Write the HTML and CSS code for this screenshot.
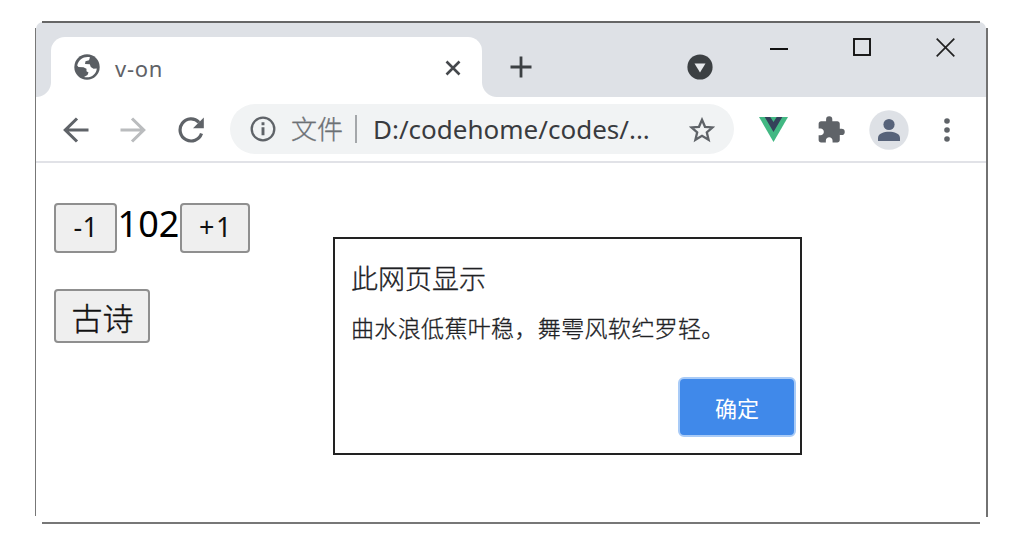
FILE: index.html
```html
<!DOCTYPE html>
<html lang="zh-CN">
<head>
<meta charset="utf-8">
<title>v-on</title>
<link rel="stylesheet" href="styles.css">
</head>
<body>
<div class="window">
  <header class="tabstrip">
    <div class="tab">
      <svg class="globe" width="26" height="26" viewBox="0 0 26 26"><circle cx="13" cy="13" r="12.700" fill="#5a5e63"/><path d="M16 3.200C10 2 4.500 5.500 3.200 11.500l1.300 1.500 5 .3 3 1.500v2.500l2 1.200-1 2.500-3.500 2C16.500 24.500 22.500 20.500 22.800 14.500l-3.300.3-2.700-1.800-1-2.700-4.800-.3.500-2.800 3.500-1z" fill="#fff"/></svg>
      <span class="tab-title">v-on</span>
      <svg class="tab-close" width="16" height="16" viewBox="0 0 16 16"><path d="M1.500 1.500l13 13M14.500 1.500l-13 13" stroke="#45484c" stroke-width="2.600"/></svg>
    </div>
    <svg class="new-tab" width="22" height="22" viewBox="0 0 22 22"><path d="M11 .5v21M.5 11h21" stroke="#3c4043" stroke-width="2.800"/></svg>
    <svg class="tab-search" width="26" height="26" viewBox="0 0 26 26"><circle cx="13" cy="13" r="12.600" fill="#3c4043"/><path d="M7.500 9.500h11L13 18.500z" fill="#e8eaed"/></svg>
    <div class="controls">
      <svg width="18" height="18" viewBox="0 0 18 18"><path d="M0 11h18" stroke="#111" stroke-width="2"/></svg>
      <svg width="18" height="18" viewBox="0 0 18 18"><rect x="1" y="1" width="16" height="16" fill="none" stroke="#111" stroke-width="1.900"/></svg>
      <svg width="19" height="19" viewBox="0 0 19 19"><path d="M.7.700l17.600 17.600M18.300.7L.7 18.300" stroke="#222" stroke-width="1.700"/></svg>
    </div>
  </header>
  <nav class="toolbar">
    <svg class="back" width="26" height="26" viewBox="0 0 26 26"><path d="M25.500 13H2.500M14 1.500L2.300 13 14 24.500" fill="none" stroke="#5f6368" stroke-width="3.100"/></svg>
    <svg class="forward" width="26" height="26" viewBox="0 0 26 26"><path d="M.5 13h23M12 1.500L23.700 13 12 24.500" fill="none" stroke="#babcbe" stroke-width="3.100"/></svg>
    <svg class="reload" width="26" height="26" viewBox="0 0 26 26"><path d="M23.500 16.500A11 11 0 1 1 21 5.300" fill="none" stroke="#5f6368" stroke-width="3.200"/><path d="M25.800.5v10.800H15z" fill="#5f6368"/></svg>
    <div class="omnibox">
      <svg class="info" width="26" height="26" viewBox="0 0 26 26"><circle cx="13" cy="13" r="11.300" fill="none" stroke="#5f6368" stroke-width="2.300"/><path d="M13 11.300v8M13 6.300v3" stroke="#5f6368" stroke-width="2.900"/></svg>
      <span class="scheme">文件</span>
      <span class="divider"></span>
      <span class="url">D:/codehome/codes/...</span>
      <svg class="star" width="26" height="26" viewBox="0 0 26 26"><path d="M13 2.800l3 7 7.500.6-5.700 4.900 1.800 7.500-6.600-4-6.600 4 1.800-7.500-5.700-4.900 7.500-.6z" fill="none" stroke="#5f6368" stroke-width="2.300"/></svg>
    </div>
    <svg class="vue" width="29" height="25" viewBox="0 0 29 25"><path d="M0 0h29L14.500 25z" fill="#42b883"/><path d="M5.700 0h5.600l3.200 5 3.200-5h5.600l-8.800 15z" fill="#34405a"/></svg>
    <svg class="puzzle" width="27" height="27" viewBox="1.500 .7 21.700 21.700"><path d="M20.500 11H19V7c0-1.100-.9-2-2-2h-4V3.500a2.500 2.500 0 0 0-5 0V5H4c-1.100 0-1.990.9-1.990 2v3.800H3.500c1.490 0 2.700 1.210 2.700 2.700s-1.210 2.700-2.700 2.700H2V20c0 1.100.9 2 2 2h3.800v-1.500c0-1.490 1.210-2.700 2.700-2.700s2.700 1.210 2.700 2.700V22H17c1.100 0 2-.9 2-2v-4h1.500a2.500 2.500 0 0 0 0-5z" fill="#5f6368"/></svg>
    <svg class="avatar" width="40" height="40" viewBox="0 0 40 40"><circle cx="20" cy="20" r="19.700" fill="#dee1e6"/><circle cx="20" cy="14.500" r="5.600" fill="#57637a"/><path d="M9 31v-3c0-4.500 6-6.200 11-6.200s11 1.700 11 6.200v3z" fill="#57637a"/></svg>
    <svg class="menu" width="6" height="26" viewBox="0 0 6 26"><g fill="#5f6368"><circle cx="3" cy="4" r="2.800"/><circle cx="3" cy="13" r="2.800"/><circle cx="3" cy="22" r="2.800"/></g></svg>
  </nav>
  <main class="page">
    <section class="demo">
      <div class="counter">
        <button class="btn minus">-1</button><span class="count">102</span><button class="btn plus">+1</button>
      </div>
      <button class="btn poem">古诗</button>
    </section>
    <section class="dialog">
      <h1 class="dialog-title">此网页显示</h1>
      <p class="dialog-text">曲水浪低蕉叶稳，舞雩风软纻罗轻。</p>
      <button class="ok">确定</button>
    </section>
  </main>
</div>
</body>
</html>
```
FILE: styles.css
```css
* { box-sizing: border-box; }
body {
  margin: 0;
  padding: 21px 0 0 35px;
  background: #fff;
  font-family: "Noto Sans", "Noto Sans CJK SC", sans-serif;
}
svg { display: block; flex: none; }
button { padding: 0; font-family: inherit; }
.window {
  width: 953px;
  height: 503px;
  padding: 1px 2px 2px 1px;
  background:
    linear-gradient(#666, #666) 7px 0 / 938px 2px no-repeat,
    linear-gradient(#777, #777) 7px 501px / 938px 2px no-repeat,
    linear-gradient(#777, #777) 0 7px / 1px 488px no-repeat,
    linear-gradient(#727272, #727272) 951px 7px / 2px 489px no-repeat;
}
.tabstrip {
  display: flex;
  height: 75px;
  padding-left: 15px;
  background: linear-gradient(#666, #666) 6px 0 / 938px 1px no-repeat, #dee1e6;
  border-radius: 7px 7px 0 0;
}
.tab {
  position: relative;
  display: flex;
  width: 431px;
  height: 60px;
  margin-top: 15px;
  padding: 17px 21px 0 23px;
  background: #fff;
  border-radius: 14px 14px 0 0;
}
.tab::before, .tab::after {
  content: "";
  position: absolute;
  bottom: 0;
  width: 15px;
  height: 15px;
}
.tab::before { right: 100%; background: radial-gradient(circle at 0 0, #dee1e6 14.5px, #fff 15.5px); }
.tab::after { left: 100%; background: radial-gradient(circle at 100% 0, #dee1e6 14.5px, #fff 15.5px); }
.tab-title {
  margin: 1px 0 0 15px;
  font-size: 22px;
  line-height: 26px;
  letter-spacing: .7px;
  color: #5f6267;
}
.tab-close { margin: 6px 0 0 auto; }
.new-tab { margin: 34px 0 0 28px; }
.tab-search { margin: 32px 0 0 155px; }
.controls { display: flex; gap: 65px; margin: 16px 0 0 57px; }
.toolbar {
  display: flex;
  align-items: center;
  height: 66px;
  padding-left: 27px;
  border-bottom: 2px solid #e1e2e7;
}
.back { margin-top: 1px; }
.forward { margin: 1px 0 0 31px; }
.reload { margin: 1px 0 0 32px; }
.omnibox {
  display: flex;
  align-items: center;
  width: 504px;
  height: 50px;
  margin-left: 26px;
  padding-left: 20px;
  background: #f1f3f4;
  border-radius: 25px;
  font-size: 26px;
  line-height: 50px;
  white-space: nowrap;
}
.scheme {
  width: 52px;
  margin-left: 15px;
  color: #6c7074;
  font-weight: 300;
  -webkit-text-stroke: .3px;
}
.divider { width: 2px; height: 28px; margin-left: 12px; background: #a4a7aa; }
.url { width: 280px; margin-left: 16px; color: #393b3f; letter-spacing: 0; }
.star { margin: 1px 0 0 36px; }
.vue { margin-left: 25px; }
.puzzle { margin-left: 30px; }
.avatar { margin: 1px 0 0 24px; }
.menu { margin: 2px 0 0 35px; }
.page { display: flex; align-items: flex-start; }
.demo { width: 279px; padding: 40px 0 0 18px; }
.counter { display: flex; height: 50px; margin-bottom: 36px; }
.btn {
  background: #efefef;
  border: 2px solid #8f8f8f;
  border-radius: 4px;
  color: #111;
  font-size: 27px;
}
.minus { width: 63px; height: 50px; padding: 0 0 3px 1px; letter-spacing: .5px; }
.plus { width: 70px; height: 50px; padding: 0 0 3px 2px; letter-spacing: 1.5px; }
.count { width: 63px; text-align: center; font-size: 36px; line-height: 42px; letter-spacing: 0; }
.poem {
  display: block;
  width: 96px;
  height: 54px;
  padding-left: 1px;
  font-size: 31px;
  font-weight: 300;
  -webkit-text-stroke: .4px;
}
.dialog {
  display: flex;
  flex-direction: column;
  width: 469px;
  height: 218px;
  margin: 74px 0 0 18px;
  padding: 20px 4px 0 16px;
  border: 2px solid #222;
  background: #fff;
}
.dialog-title, .dialog-text {
  margin: 0;
  font-weight: 300;
  color: #202124;
  -webkit-text-stroke: .3px;
  white-space: nowrap;
}
.dialog-title { font-size: 27px; line-height: 40px; }
.dialog-text { margin-top: 11px; font-size: 23px; line-height: 36px; letter-spacing: .35px; }
.ok {
  align-self: flex-end;
  width: 118px;
  height: 60px;
  margin-top: 31px;
  border: 2px solid #a9cbf7;
  border-radius: 6px;
  background: #4089ea;
  color: #fff;
  font-size: 22px;
}
```
